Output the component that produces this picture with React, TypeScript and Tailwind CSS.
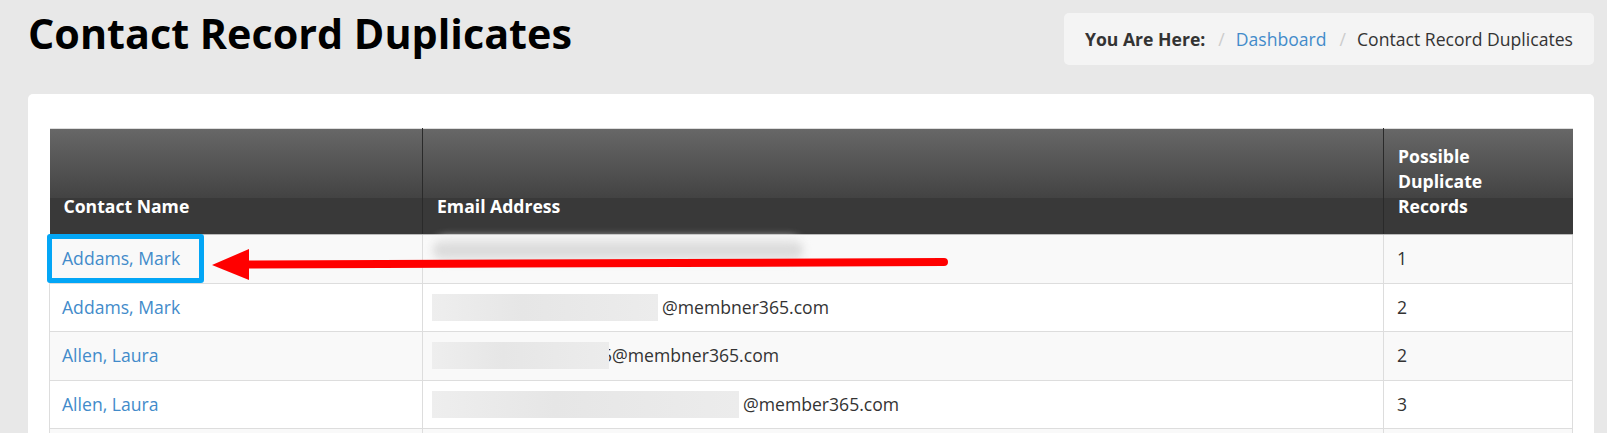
const rows = [
  { name: "Addams, Mark", email: null, blur: 0, count: "1" },
  { name: "Addams, Mark", email: "@membner365.com", blur: 226, count: "2" },
  { name: "Allen, Laura", email: "5@membner365.com", blur: 177, count: "2", overlap: true },
  { name: "Allen, Laura", email: "@member365.com", blur: 307, count: "3" },
  { name: "Allen, Laura", email: "@member365.com", blur: 260, count: "1" },
];

function EmailCell({ row }: { row: (typeof rows)[number] }) {
  if (!row.email) {
    return (
      <div className="-ml-[2px] -mt-[9px] mb-[8px] h-[26px] w-[370px] rounded-full bg-[linear-gradient(to_bottom,#f2f2f2,#d6d6d6_50%,#efefef)] blur-[4px]" />
    );
  }
  return (
    <div className="-ml-[3px] flex h-[25px] items-center">
      <div
        className={
          row.overlap
            ? "relative z-10 -mr-[7px] h-[27px] shrink-0 bg-[linear-gradient(to_right,#eeeeee,#e6e6e6_40%,#ececec)]"
            : "mr-[4px] h-[27px] shrink-0 bg-[linear-gradient(to_right,#eeeeee,#e6e6e6_40%,#ececec)]"
        }
        style={{ width: row.blur }}
      />
      <span>{row.email}</span>
    </div>
  );
}

export default function App() {
  return (
    <div className="min-h-screen bg-[#e8e8e8] pl-[28px] pr-[13px] font-['Open_Sans',sans-serif] text-[17.6px] leading-[25px] text-[#333]">
      <div className="flex h-[94px] items-start justify-between">
        <h1 className="mt-[11px] text-[41.3px] font-bold leading-[1.1] text-black">Contact Record Duplicates</h1>
        <nav className="mt-[13px] flex h-[52px] items-center rounded-[5px] bg-[#f4f4f4] px-[21px]">
          <span className="font-bold">You Are Here:</span>
          <span className="ml-[13px] mr-[11px] text-[#ccc]">/</span>
          <a className="text-[#428bca]">Dashboard</a>
          <span className="ml-[13px] mr-[11px] text-[#ccc]">/</span>
          <span>Contact Record Duplicates</span>
        </nav>
      </div>

      <div className="rounded-[5px] bg-white px-[21px] pt-[34px]">
        <div className="relative">
          <table className="w-full table-fixed border-collapse border-t border-[#ddd]">
            <colgroup>
              <col className="w-[373px]" />
              <col />
              <col className="w-[189px]" />
            </colgroup>
            <thead>
              <tr className="bg-[linear-gradient(to_bottom,#676767,#434343_69px,#393939_69px)] text-left align-bottom text-white">
                <th className="border-r border-b border-r-[#2a2a2a] border-b-[#bbb] px-[14px] pb-[15px] pt-[15px] font-bold">Contact Name</th>
                <th className="border-r border-b border-r-[#2a2a2a] border-b-[#bbb] px-[14px] pb-[15px] pt-[15px] font-bold">Email Address</th>
                <th className="border-b border-b-[#bbb] px-[14px] pb-[15px] pt-[15px] font-bold">
                  Possible
                  <br />
                  Duplicate
                  <br />
                  Records
                </th>
              </tr>
            </thead>
            <tbody>
              {rows.map((row, i) => (
                <tr key={i} className={i % 2 === 0 ? "bg-[#f9f9f9]" : "bg-white"}>
                  <td className="relative border border-[#ddd] px-[12px] py-[11.3px]">
                    <a className="text-[#428bca]">{row.name}</a>
                    {i === 0 && (
                      <div className="absolute -left-[3px] -top-[1px] h-[49px] w-[157px] rounded-[3px] border-[5px] border-[#03a6f6]" />
                    )}
                  </td>
                  <td className="border border-[#ddd] px-[12px] py-[11.3px]">
                    <EmailCell row={row} />
                  </td>
                  <td className="border border-[#ddd] px-[13px] py-[11.3px]">{row.count}</td>
                </tr>
              ))}
            </tbody>
          </table>

          <svg
            className="pointer-events-none absolute left-[151px] top-[116px]"
            width="760"
            height="40"
            viewBox="0 0 760 40"
          >
            <line x1="45" y1="20.5" x2="744" y2="18" stroke="#ff0000" strokeWidth="8" strokeLinecap="round" />
            <polygon points="12,21 49,5 49,36" fill="#ff0000" />
          </svg>
        </div>
      </div>
    </div>
  );
}
